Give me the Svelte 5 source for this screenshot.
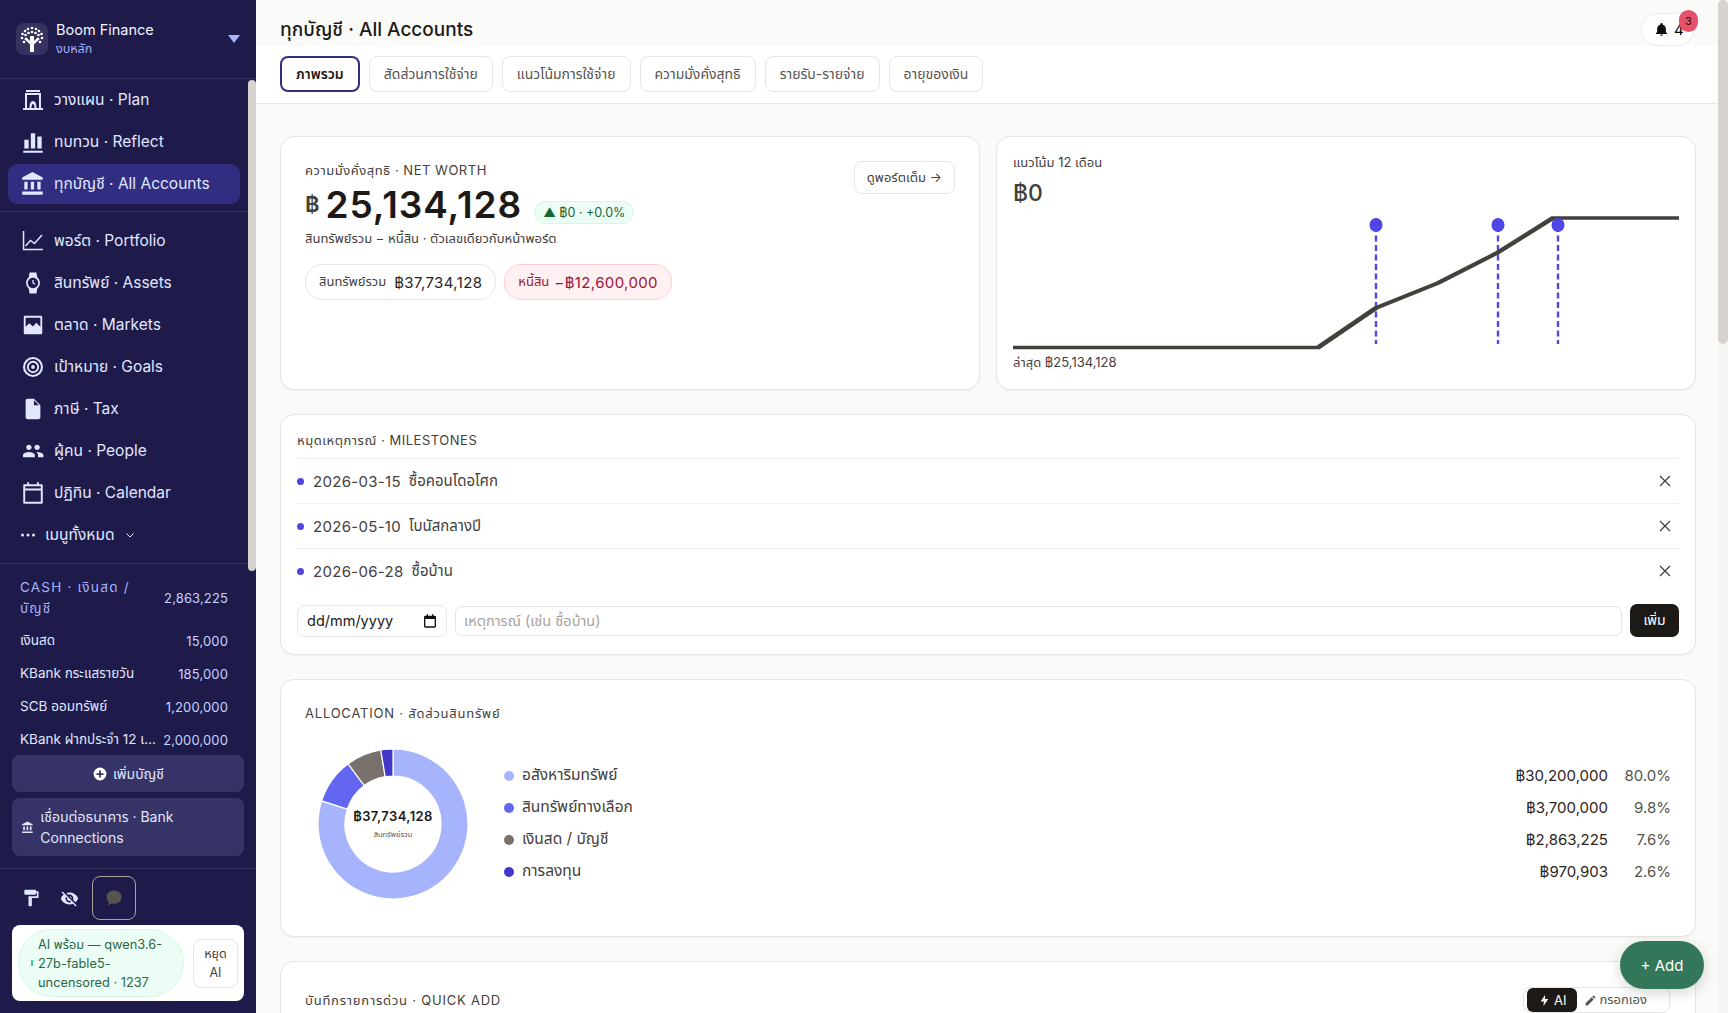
<script lang="ts">
  const planNav = [
    { label: "วางแผน · Plan", icon: "plan" },
    { label: "ทบทวน · Reflect", icon: "reflect" },
    { label: "ทุกบัญชี · All Accounts", icon: "bank", active: true },
  ];
  const moreNav = [
    { label: "พอร์ต · Portfolio", icon: "chart" },
    { label: "สินทรัพย์ · Assets", icon: "watch" },
    { label: "ตลาด · Markets", icon: "photo" },
    { label: "เป้าหมาย · Goals", icon: "target" },
    { label: "ภาษี · Tax", icon: "file" },
    { label: "ผู้คน · People", icon: "people" },
    { label: "ปฏิทิน · Calendar", icon: "calendar" },
  ];
  const accounts = [
    { name: "เงินสด", value: "15,000" },
    { name: "KBank กระแสรายวัน", value: "185,000" },
    { name: "SCB ออมทรัพย์", value: "1,200,000" },
    { name: "KBank ฝากประจำ 12 เดือน", value: "2,000,000" },
  ];
  const tabs = ["ภาพรวม", "สัดส่วนการใช้จ่าย", "แนวโน้มการใช้จ่าย", "ความมั่งคั่งสุทธิ", "รายรับ-รายจ่าย", "อายุของเงิน"];
  const milestones = [
    { date: "2026-03-15", name: "ซื้อคอนโดอโศก" },
    { date: "2026-05-10", name: "โบนัสกลางปี" },
    { date: "2026-06-28", name: "ซื้อบ้าน" },
  ];
  const allocation = [
    { name: "อสังหาริมทรัพย์", amount: "฿30,200,000", pct: 80.0, color: "#a5b4fc" },
    { name: "สินทรัพย์ทางเลือก", amount: "฿3,700,000", pct: 9.8, color: "#6366f1" },
    { name: "เงินสด / บัญชี", amount: "฿2,863,225", pct: 7.6, color: "#78716c" },
    { name: "การลงทุน", amount: "฿970,903", pct: 2.6, color: "#4338ca" },
  ];

  // icons are drawn at different sizes in a 24 box, this evens them out
  const iconScale: Record<string, number> = {
    plan: 0.92,
    reflect: 1,
    bank: 1,
    chart: 0.92,
    watch: 0.8,
    photo: 0.85,
    target: 0.87,
    file: 0.85,
    people: 0.84,
    calendar: 0.9,
  };
  function iconBox(name: string) {
    const size = 24 / iconScale[name];
    const off = (24 - size) / 2;
    return `${off} ${off} ${size} ${size}`;
  }

  function point(r: number, pct: number) {
    const a = (pct / 100) * Math.PI * 2;
    return `${(75 + r * Math.sin(a)).toFixed(2)} ${(75 - r * Math.cos(a)).toFixed(2)}`;
  }

  function sector(from: number, to: number) {
    const large = to - from > 50 ? 1 : 0;
    return `M${point(75, from)}A75 75 0 ${large} 1 ${point(75, to)}L${point(48, to)}A48 48 0 ${large} 0 ${point(48, from)}Z`;
  }

  let total = 0;
  const slices = allocation.map((a) => {
    const d = sector(total, total + a.pct);
    total += a.pct;
    return { d, color: a.color };
  });

  const markerX = [181.5, 242.5, 272.5];
  const leaves = [[16, 5], [12, 6], [20, 6], [9, 8], [23, 8], [6.5, 11], [25.5, 11], [6, 15], [26, 15], [8, 19], [24, 19], [16, 9], [12.5, 10], [19.5, 10], [9.5, 12], [22.5, 12], [10, 16], [22, 16]];
</script>

{#snippet navIcon(name: string)}
  <svg class="nav-icon" viewBox={iconBox(name)} fill="currentColor">
    {#if name === "plan"}
      <path fill-rule="evenodd" d="M5 2h14v2H5zM4 5h16v15h2v2H2v-2h2zm2 2v13h2.500c0-4 1-7 3.500-7s3.500 3 3.500 7H18V7zm4.500 13h3c0-2-.5-4-1.500-4s-1.500 2-1.500 4z" />
    {:else if name === "reflect"}
      <path d="M3 20h18v2H3zM4 10h4v8H4zM10 4h4v14h-4zM16 7h4v11h-4z" />
    {:else if name === "bank"}
      <path d="M4 10v7h3v-7H4zm6 0v7h3v-7h-3zM2 22h19v-3H2v3zm14-12v7h3v-7h-3zm-4.500-9L2 6v2h19V6l-9.500-5z" />
    {:else if name === "chart"}
      <path d="M2.500 2v18.500H22" fill="none" stroke="currentColor" stroke-width="1.500" />
      <path d="M4.500 17l5-5.500 4 3L21 6" fill="none" stroke="currentColor" stroke-width="1.500" />
    {:else if name === "watch"}
      <path d="M20 12c0-2.540-1.190-4.810-3.040-6.270L16 0H8l-.95 5.730C5.190 7.190 4 9.450 4 12s1.190 4.810 3.050 6.270L8 24h8l.96-5.730C18.810 16.810 20 14.540 20 12zM6 12c0-3.310 2.690-6 6-6s6 2.690 6 6-2.690 6-6 6-6-2.690-6-6z" />
      <path d="M12 8.500V12l2.500 1.500" fill="none" stroke="currentColor" stroke-width="1.500" />
    {:else if name === "photo"}
      <path fill-rule="evenodd" d="M3 2h18a1 1 0 0 1 1 1v18a1 1 0 0 1-1 1H3a1 1 0 0 1-1-1V3a1 1 0 0 1 1-1zm1 2v10l4-4 4 3.500 3.500-4L20 14V4z" />
    {:else if name === "target"}
      <circle cx="12" cy="12" r="9.500" fill="none" stroke="currentColor" stroke-width="2.200" />
      <circle cx="12" cy="12" r="5.500" fill="none" stroke="currentColor" stroke-width="2" />
      <circle cx="12" cy="12" r="2" />
    {:else if name === "file"}
      <path d="M6 1c-1.100 0-2 .9-2 2v18c0 1.100.9 2 2 2h12c1.100 0 2-.9 2-2V8l-7-7H6zm7 7V2.500L18.500 8H13z" />
    {:else if name === "people"}
      <path d="M16.500 11c1.660 0 3-1.340 3-3s-1.340-3-3-3-3 1.340-3 3 1.340 3 3 3zm-9 0c1.660 0 3-1.340 3-3s-1.340-3-3-3-3 1.340-3 3 1.340 3 3 3zm0 2c-2.330 0-6.500 1.170-6.500 3.500V19h13v-2.500c0-2.330-4.170-3.500-6.500-3.500zm9 0c-.29 0-.62.020-.97.05 1.160.84 1.970 1.970 1.970 3.450V19h6v-2.500c0-2.330-4.670-3.500-7-3.500z" />
    {:else if name === "calendar"}
      <path fill-rule="evenodd" d="M6 1h2v2h8V1h2v2h3a1 1 0 0 1 1 1v18a1 1 0 0 1-1 1H3a1 1 0 0 1-1-1V4a1 1 0 0 1 1-1h3zM4 5v2.500h16V5zm0 4.500V21h16V9.500z" />
    {/if}
  </svg>
{/snippet}

<div class="app">
  <aside class="sidebar">
    <div class="brand">
      <span class="logo">
        <svg viewBox="0 0 32 32" width="32" height="32" fill="#fff">
          <path d="M14 29v-7.500L8.500 16l1.700-1.700 3.800 3.700v-5h4v5l3.800-3.700 1.700 1.700-5.500 5.500V29z" />
          {#each leaves as [cx, cy]}
            <circle {cx} {cy} r="1.350" />
          {/each}
        </svg>
      </span>
      <div class="brand-text">
        <div class="brand-name">Boom Finance</div>
        <div class="brand-sub">งบหลัก</div>
      </div>
      <span class="caret"></span>
    </div>

    <div class="side-scroll">
      <nav class="nav nav-first">
        {#each planNav as item}
          <a class="nav-item" class:active={item.active} href="#top">
            {@render navIcon(item.icon)}
            <span>{item.label}</span>
          </a>
        {/each}
      </nav>
      <nav class="nav nav-second">
        {#each moreNav as item}
          <a class="nav-item" href="#top">
            {@render navIcon(item.icon)}
            <span>{item.label}</span>
          </a>
        {/each}
        <button class="nav-all">
          <svg viewBox="0 0 16 16" width="16" height="16" fill="currentColor">
            <circle cx="2.500" cy="8" r="1.500" /><circle cx="8" cy="8" r="1.500" /><circle cx="13.500" cy="8" r="1.500" />
          </svg>
          <span>เมนูทั้งหมด</span>
          <svg viewBox="0 0 12 12" width="12" height="12" fill="none" stroke="currentColor" stroke-width="1"><path d="M2.500 4.500L6 8l3.500-3.500" /></svg>
        </button>
      </nav>

      <section class="accounts">
        <div class="acc-head">
          <span class="acc-title">CASH · เงินสด / บัญชี</span>
          <span class="acc-total">2,863,225</span>
        </div>
        {#each accounts as acc}
          <div class="acc-row">
            <span class="acc-name">{acc.name}</span>
            <span class="acc-value">{acc.value}</span>
          </div>
        {/each}
      </section>

      <div class="side-actions">
        <button class="side-btn center">
          <svg viewBox="0 0 24 24" width="14" height="14" fill="#fff"><path d="M12 1a11 11 0 1 0 0 22 11 11 0 0 0 0-22zm6 12.500h-4.500V18h-3v-4.500H6v-3h4.500V6h3v4.500H18z" /></svg>
          เพิ่มบัญชี
        </button>
        <button class="side-btn">
          <svg viewBox="0 0 24 24" width="15" height="15" fill="currentColor"><path d="M4 10v7h3v-7H4zm6 0v7h3v-7h-3zM2 22h19v-3H2v3zm14-12v7h3v-7h-3zm-4.500-9L2 6v2h19V6l-9.500-5z" /></svg>
          <span>เชื่อมต่อธนาคาร · Bank Connections</span>
        </button>
      </div>
    </div>
    <span class="side-thumb"></span>

    <div class="side-foot">
      <div class="tools">
        <button class="tool">
          <svg viewBox="0 0 24 24" width="20" height="20" fill="#e0e7ff"><path d="M18 4V3c0-.55-.45-1-1-1H5c-.55 0-1 .45-1 1v4c0 .55.45 1 1 1h12c.55 0 1-.45 1-1V6h1v4H9v11c0 .55.45 1 1 1h2c.55 0 1-.45 1-1v-9h8V4h-3z" /></svg>
        </button>
        <button class="tool">
          <svg viewBox="0 0 24 24" width="19" height="19" fill="#e0e7ff"><path d="M12 7c2.760 0 5 2.240 5 5 0 .65-.13 1.260-.36 1.830l2.920 2.920c1.510-1.260 2.700-2.890 3.430-4.750-1.730-4.390-6-7.500-11-7.500-1.400 0-2.740.25-3.980.7l2.160 2.160C10.740 7.130 11.350 7 12 7zM2 4.270l2.280 2.280.46.46C3.080 8.300 1.780 10.020 1 12c1.730 4.390 6 7.500 11 7.500 1.550 0 3.030-.3 4.380-.84l.42.42L19.730 22 21 20.730 3.270 3 2 4.270zM7.530 9.800l1.550 1.550c-.05.21-.08.43-.08.65 0 1.660 1.340 3 3 3 .22 0 .44-.03.65-.08l1.550 1.550c-.67.33-1.410.53-2.200.53-2.760 0-5-2.240-5-5 0-.79.2-1.530.53-2.200zm4.310-.78l3.150 3.150.02-.16c0-1.660-1.340-3-3-3l-.17.01z" /></svg>
        </button>
        <button class="tool tool-chat">
          <svg viewBox="0 0 24 24" width="20" height="20" fill="#57534e"><path d="M12 3c5 0 9 3.400 9 8s-4 8-9 8c-1 0-1.900-.1-2.800-.4L5 21l.6-4.200A7.500 7.500 0 0 1 3 11c0-4.600 4-8 9-8z" /></svg>
        </button>
      </div>
      <div class="ai-card">
        <div class="ai-pill">
          <span class="ai-dot"></span>
          <span>AI พร้อม — qwen3.6-27b-fable5-uncensored · 1237</span>
        </div>
        <button class="ai-stop">หยุด AI</button>
      </div>
    </div>
  </aside>

  <main class="main">
    <header class="page-head">
      <h1>ทุกบัญชี · All Accounts</h1>
      <button class="bell">
        <svg viewBox="0 0 24 24" width="15" height="15" fill="#111"><path d="M12 22a2.500 2.500 0 0 0 2.400-2H9.600A2.500 2.500 0 0 0 12 22zm7-6v-5c0-3.400-1.800-6.100-5-6.800V3.500a2 2 0 0 0-4 0v.7C6.800 4.900 5 7.600 5 11v5l-2 2v1h18v-1z" /></svg>
        <span>4</span>
        <span class="bell-badge">3</span>
      </button>
    </header>
    <div class="tabs">
      {#each tabs as tab, i}
        <button class="tab" class:on={i === 0}>{tab}</button>
      {/each}
    </div>

    <div class="content">
      <div class="top-row">
        <section class="card net">
          <div class="net-head">
            <div class="eyebrow">ความมั่งคั่งสุทธิ · NET WORTH</div>
            <button class="ghost">ดูพอร์ตเต็ม →</button>
          </div>
          <div class="net-amount">
            <span class="baht">฿</span>
            <span class="big">25,134,128</span>
            <span class="delta">▲ ฿0 · +0.0%</span>
          </div>
          <div class="net-note">สินทรัพย์รวม − หนี้สิน · ตัวเลขเดียวกับหน้าพอร์ต</div>
          <div class="chips">
            <span class="chip"><small>สินทรัพย์รวม</small> ฿37,734,128</span>
            <span class="chip debt"><small>หนี้สิน</small> −฿12,600,000</span>
          </div>
        </section>

        <section class="card trend">
          <div class="eyebrow plain">แนวโน้ม 12 เดือน</div>
          <div class="trend-value">฿0</div>
          <svg class="trend-chart" viewBox="0 0 333 134" width="666" height="134" preserveAspectRatio="none">
            {#each markerX as x}
              <line x1={x} x2={x} y1="10" y2="128" stroke="#5048e5" stroke-width="2.400" stroke-dasharray="6 3.500" vector-effect="non-scaling-stroke" />
            {/each}
            <polyline points="0,131.500 152.500,131.500 181.500,92 212.500,67 242,37 270,2 333,2" fill="none" stroke="#44403c" stroke-width="3.300" />
            {#each markerX as x}
              <ellipse cx={x} cy="9" rx="3.250" ry="7" fill="#4f46e5" />
            {/each}
          </svg>
          <div class="trend-foot">ล่าสุด ฿25,134,128</div>
        </section>
      </div>

      <section class="card milestones">
        <div class="eyebrow ms-title">หมุดเหตุการณ์ · MILESTONES</div>
        {#each milestones as m}
          <div class="ms-row">
            <span class="ms-dot"></span>
            <span class="ms-date">{m.date}</span>
            <span class="ms-name">{m.name}</span>
            <svg class="ms-x" viewBox="0 0 12 12" width="12" height="12" stroke="#44403c" stroke-width="1.300"><path d="M1 1l10 10M11 1L1 11" /></svg>
          </div>
        {/each}
        <div class="ms-form">
          <div class="date-box">
            <span>dd/mm/yyyy</span>
            <svg viewBox="0 0 24 24" width="16" height="16" fill="#111"><path fill-rule="evenodd" d="M7 2h2v2h6V2h2v2h2a2 2 0 0 1 2 2v14a2 2 0 0 1-2 2H5a2 2 0 0 1-2-2V6a2 2 0 0 1 2-2h2zM5 9v11h14V9z" /></svg>
          </div>
          <input class="ms-input" placeholder="เหตุการณ์ (เช่น ซื้อบ้าน)" />
          <button class="ms-add">เพิ่ม</button>
        </div>
      </section>

      <section class="card alloc">
        <div class="eyebrow wide">ALLOCATION · สัดส่วนสินทรัพย์</div>
        <div class="alloc-body">
          <div class="donut">
            <svg viewBox="0 0 150 150" width="150" height="150">
              {#each slices as s}
                <path d={s.d} fill={s.color} stroke="#fff" stroke-width="1.200" />
              {/each}
            </svg>
            <div class="donut-label">
              <strong>฿37,734,128</strong>
              <small>สินทรัพย์รวม</small>
            </div>
          </div>
          <div class="legend">
            {#each allocation as a}
              <div class="legend-row">
                <span class="legend-dot" style:background={a.color}></span>
                <span class="legend-name">{a.name}</span>
                <span class="legend-amount">{a.amount}</span>
                <span class="legend-pct">{a.pct.toFixed(1)}%</span>
              </div>
            {/each}
          </div>
        </div>
      </section>

      <section class="card quick">
        <div class="eyebrow wide">บันทึกรายการด่วน · QUICK ADD</div>
        <div class="mode">
          <span class="mode-on">
            <svg viewBox="0 0 24 24" width="13" height="13" fill="#fff"><path d="M13 2L5 14h6l-1 8 9-13h-6z" /></svg>
            AI
          </span>
          <span class="mode-off">
            <svg viewBox="0 0 24 24" width="13" height="13" fill="#57534e"><path d="M3 17.250V21h3.750L17.800 9.940l-3.750-3.750zM20.700 7.040a1 1 0 0 0 0-1.410l-2.340-2.340a1 1 0 0 0-1.410 0l-1.830 1.830 3.750 3.750z" /></svg>
            กรอกเอง
          </span>
        </div>
      </section>
    </div>
  </main>

  <!-- page scrollbar: the headless browser hides native ones -->
  <span class="main-track"><span class="main-thumb"></span></span>

  <button class="fab">+ Add</button>
</div>

<style>
  :global(body) {
    margin: 0;
    overflow: hidden;
    font-family: Inter, "Noto Sans", "Noto Sans Thai", "Liberation Sans", sans-serif;
  }

  button {
    font: inherit;
    cursor: pointer;
  }

  .app {
    position: relative;
    display: flex;
    height: 100vh;
    overflow: hidden;
    background: #fafaf8;
    color: #1c1917;
  }

  /* sidebar */
  .sidebar {
    position: relative;
    flex: 0 0 256px;
    width: 256px;
    display: flex;
    flex-direction: column;
    background: #1e1b4b;
    color: #e0e7ff;
  }

  .brand {
    flex: 0 0 79px;
    display: flex;
    align-items: center;
    gap: 8px;
    padding: 0 16px;
    box-sizing: border-box;
    border-bottom: 1px solid #312e5c;
  }

  .logo {
    width: 32px;
    height: 32px;
    border-radius: 8px;
    background: #35325f;
  }

  .brand-text {
    flex: 1;
  }

  .brand-name {
    font-size: 14.5px;
    line-height: 20px;
    color: #f1f5ff;
  }

  .brand-sub {
    font-size: 12.5px;
    line-height: 18px;
    color: #a5b4fc;
  }

  .caret {
    width: 0;
    height: 0;
    border-left: 6px solid transparent;
    border-right: 6px solid transparent;
    border-top: 8px solid #a5b4fc;
  }

  .side-scroll {
    flex: 1;
    min-height: 0;
    display: flex;
    flex-direction: column;
    overflow: hidden;
  }

  .side-thumb {
    position: absolute;
    left: 248px;
    top: 80px;
    width: 8px;
    height: 491px;
    border-radius: 4px;
    background: #d6d3ce;
  }

  .nav {
    flex: none;
    display: flex;
    flex-direction: column;
    gap: 2px;
    width: 248px;
    padding: 0 8px;
    box-sizing: border-box;
    border-bottom: 1px solid #312e5c;
  }

  .nav-first {
    padding-top: 1px;
    padding-bottom: 7px;
  }

  .nav-second {
    padding-top: 9px;
    padding-bottom: 8px;
  }

  .nav-item {
    display: flex;
    align-items: center;
    gap: 8.500px;
    height: 40px;
    padding: 0 11.500px;
    border-radius: 9px;
    color: #e0e7ff;
    text-decoration: none;
    font-size: 15.5px;
  }

  .nav-item.active {
    background: #312e81;
  }

  .nav-icon {
    width: 26px;
    height: 26px;
    flex: none;
  }

  .nav-all {
    display: flex;
    align-items: center;
    gap: 9px;
    height: 40px;
    padding: 0 12px;
    border: 0;
    background: transparent;
    color: #e0e7ff;
    font-size: 15.5px;
  }

  .accounts {
    flex: 1 1 0;
    min-height: 0;
    overflow: hidden;
    width: 240px;
    box-sizing: border-box;
    padding: 13px 12px 0 20px;
    font-size: 13.5px;
  }

  .acc-head {
    display: flex;
    align-items: center;
    justify-content: space-between;
    gap: 12px;
    margin-bottom: 5px;
  }

  .acc-title {
    width: 120px;
    color: #a5b4fc;
    letter-spacing: 0.09em;
    line-height: 21px;
  }

  .acc-total,
  .acc-value {
    color: #c7d2fe;
    font-size: 13px;
    letter-spacing: 0.01em;
  }

  .acc-row {
    display: flex;
    justify-content: space-between;
    gap: 4px;
    height: 33px;
    align-items: center;
  }

  .acc-name {
    flex: 1;
    min-width: 0;
    overflow: hidden;
    white-space: nowrap;
    text-overflow: ellipsis;
  }

  .side-actions {
    flex: none;
    display: flex;
    flex-direction: column;
    gap: 6px;
    width: 248px;
    padding: 0 4px 12px 12px;
    box-sizing: border-box;
    background: #1e1b4b;
  }

  .side-btn {
    display: flex;
    align-items: center;
    gap: 6px;
    padding: 8px 8px 8px 9px;
    min-height: 37px;
    border: 0;
    border-radius: 8px;
    background: #363366;
    color: #e0e7ff;
    font-size: 14px;
    line-height: 21px;
    text-align: left;
  }

  .side-btn.center {
    justify-content: center;
  }

  .side-foot {
    flex: 0 0 145px;
    box-sizing: border-box;
    border-top: 1px solid #312e5c;
    padding: 7px 12px 0;
  }

  .tools {
    display: flex;
    align-items: center;
    height: 44px;
    margin-bottom: 5px;
  }

  .tool {
    width: 38px;
    height: 44px;
    padding: 0;
    border: 0;
    background: transparent;
    display: grid;
    place-items: center;
  }

  .tool-chat {
    width: 44px;
    margin-left: 4px;
    border: 1.500px solid #a8a29e;
    border-radius: 8px;
  }

  .ai-card {
    display: flex;
    align-items: center;
    gap: 9px;
    height: 76px;
    padding: 0 6px;
    box-sizing: border-box;
    background: #fff;
    border-radius: 8px;
  }

  .ai-pill {
    flex: 1;
    display: flex;
    align-items: center;
    gap: 5px;
    height: 68px;
    padding: 0 8px 0 12px;
    box-sizing: border-box;
    border: 1px solid #d1fae5;
    border-radius: 34px;
    background: #ecfdf5;
    color: #276749;
    font-size: 12.800px;
    line-height: 19px;
  }

  .ai-dot {
    flex: none;
    width: 2px;
    height: 6px;
    background: #34d399;
  }

  .ai-stop {
    flex: 0 0 45px;
    height: 49px;
    padding: 0 6px;
    border: 1px solid #e7e5e4;
    border-radius: 8px;
    background: #fff;
    color: #44403c;
    font-size: 12.500px;
    line-height: 19px;
  }

  /* main */
  .main {
    flex: 1;
    min-width: 0;
    overflow: hidden;
  }

  .main-track {
    position: absolute;
    right: 0;
    top: 0;
    bottom: 0;
    width: 10px;
    background: #f4f4f2;
  }

  .main-thumb {
    display: block;
    height: 344px;
    border-radius: 5px;
    background: #d6d3ce;
  }

  .page-head {
    position: relative;
    height: 46px;
    padding: 0 32px 0 24px;
    display: flex;
    align-items: center;
    justify-content: space-between;
    box-sizing: border-box;
  }

  h1 {
    margin: 14px 0 0;
    font-size: 19px;
    font-weight: 500;
    line-height: 30px;
  }

  .bell {
    position: absolute;
    right: 34px;
    top: 13px;
    width: 53px;
    height: 33px;
    display: flex;
    align-items: center;
    gap: 5px;
    padding: 0 0 0 12px;
    border: 1px solid #eeedeb;
    border-radius: 17px;
    background: #fff;
    font-size: 15px;
    z-index: 1;
  }

  .bell-badge {
    position: absolute;
    right: -5px;
    top: -4px;
    width: 19px;
    height: 22px;
    border-radius: 10px;
    background: #e5526b;
    color: #3b0713;
    font-size: 11px;
    line-height: 22px;
    text-align: center;
  }

  .tabs {
    display: flex;
    gap: 9px;
    height: 58px;
    padding: 10px 24px 11px;
    box-sizing: border-box;
    background: #fff;
    border-bottom: 1px solid #e7e5e4;
  }

  .tab {
    padding: 0 14px;
    border: 1px solid #e7e5e4;
    border-radius: 8px;
    background: #fff;
    color: #57534e;
    font-size: 14px;
  }

  .tab.on {
    border: 2px solid #312e81;
    color: #1c1917;
    font-weight: 600;
  }

  .content {
    display: flex;
    flex-direction: column;
    gap: 24px;
    padding: 32px 32px 0 24px;
    box-sizing: border-box;
  }

  .top-row {
    display: grid;
    grid-template-columns: 1fr 1fr;
    gap: 16px;
  }

  .card {
    box-sizing: border-box;
    background: #fff;
    border: 1px solid #e7e5e4;
    border-radius: 14px;
    box-shadow: 0 1px 2px rgba(28, 25, 23, 0.04);
  }

  .eyebrow {
    font-size: 13px;
    color: #44403c;
    letter-spacing: 0.04em;
  }

  .eyebrow.plain {
    letter-spacing: 0;
  }

  .eyebrow.wide {
    letter-spacing: 0.06em;
  }

  .net {
    height: 254px;
    padding: 24px;
  }

  .net-head {
    display: flex;
    justify-content: space-between;
    align-items: flex-start;
  }

  .ghost {
    height: 33px;
    padding: 0 12px;
    border: 1px solid #e7e5e4;
    border-radius: 8px;
    background: #fff;
    color: #44403c;
    font-size: 13px;
  }

  .net-amount {
    display: flex;
    align-items: center;
    margin-top: -10px;
    height: 40px;
  }

  .baht {
    font-size: 22px;
    font-weight: 600;
    margin-right: 6px;
    color: #44403c;
  }

  .big {
    font-size: 37px;
    font-weight: 600;
    letter-spacing: 0.025em;
  }

  .delta {
    margin: 17px 0 0 12px;
    padding: 3px 8px;
    border: 1px solid #d1fae5;
    border-radius: 14px;
    background: #ecfdf5;
    color: #166534;
    font-size: 12.500px;
  }

  .net-note {
    margin-top: 5px;
    font-size: 13px;
    color: #44403c;
  }

  .chips {
    display: flex;
    gap: 8px;
    margin-top: 15px;
  }

  .chip {
    height: 34px;
    padding: 0 13px;
    display: flex;
    align-items: center;
    gap: 8px;
    border: 1px solid #e7e5e4;
    border-radius: 17px;
    background: #fff;
    font-size: 15px;
    letter-spacing: 0.025em;
    color: #292524;
  }

  .chip small {
    font-size: 13px;
    letter-spacing: 0;
    color: #44403c;
  }

  .chip.debt,
  .chip.debt small {
    color: #9f1239;
  }

  .chip.debt {
    gap: 5px;
    background: #fff1f2;
    border-color: #fecdd3;
  }

  .trend {
    height: 254px;
    padding: 16px;
  }

  .trend-value {
    margin-top: 6px;
    font-size: 23px;
    font-weight: 500;
    color: #44403c;
  }

  .trend-chart {
    display: block;
    margin-top: 9px;
    overflow: visible;
  }

  .trend-foot {
    margin-top: 3px;
    font-size: 13px;
    color: #44403c;
  }

  .milestones {
    height: 241px;
    padding: 16px;
  }

  .ms-title {
    padding-bottom: 8px;
    line-height: 19px;
  }

  .ms-row {
    display: flex;
    align-items: center;
    height: 45px;
    box-sizing: border-box;
    border-top: 1px solid #f2f1ef;
    font-size: 15px;
    color: #44403c;
  }

  .ms-dot {
    width: 7px;
    height: 7px;
    border-radius: 50%;
    background: #4f46e5;
    margin-right: 9px;
  }

  .ms-date {
    letter-spacing: 0.02em;
    margin-right: 8px;
  }

  .ms-x {
    margin-left: auto;
    margin-right: 8px;
  }

  .ms-form {
    display: flex;
    gap: 8px;
    align-items: center;
    margin-top: 11px;
  }

  .date-box {
    flex: 0 0 150px;
    height: 32px;
    display: flex;
    align-items: center;
    justify-content: space-between;
    padding: 0 8px 0 9px;
    box-sizing: border-box;
    border: 1px solid #e7e5e4;
    border-radius: 7px;
    font-size: 14.500px;
    color: #1c1917;
  }

  .ms-input {
    flex: 1;
    height: 30px;
    padding: 0 8px;
    box-sizing: border-box;
    border: 1px solid #e7e5e4;
    border-radius: 7px;
    font: inherit;
    font-size: 14.500px;
  }

  .ms-input::placeholder {
    color: #a8a29e;
  }

  .ms-add {
    height: 33px;
    width: 49px;
    padding: 0;
    border: 0;
    border-radius: 7px;
    background: #1c1917;
    color: #fff;
    font-size: 14px;
  }

  .alloc {
    height: 258px;
    padding: 24px;
  }

  .alloc-body {
    display: flex;
    align-items: center;
    gap: 36px;
    margin-top: 25px;
  }

  .donut {
    position: relative;
    width: 150px;
    height: 150px;
    margin-left: 13px;
    flex: none;
  }

  .donut-label {
    position: absolute;
    inset: 0;
    display: flex;
    flex-direction: column;
    align-items: center;
    justify-content: center;
    gap: 5px;
    padding-bottom: 1px;
    box-sizing: border-box;
  }

  .donut-label strong {
    font-size: 13px;
    font-weight: 600;
    letter-spacing: 0.03em;
  }

  .donut-label small {
    font-size: 7.500px;
    color: #57534e;
  }

  .legend {
    flex: 1;
    display: flex;
    flex-direction: column;
    margin-top: -1px;
  }

  .legend-row {
    display: flex;
    align-items: center;
    height: 32px;
    font-size: 15px;
    color: #44403c;
  }

  .legend-dot {
    width: 10px;
    height: 10px;
    border-radius: 50%;
    margin-right: 8px;
  }

  .legend-name {
    flex: 1;
    font-size: 15.500px;
  }

  .legend-amount {
    color: #292524;
  }

  .legend-pct {
    width: 63px;
    text-align: right;
    color: #57534e;
  }

  .quick {
    position: relative;
    height: 420px;
    padding: 29px 24px;
  }

  .mode {
    position: absolute;
    right: 25px;
    top: 25px;
    display: flex;
    align-items: center;
    gap: 7px;
    height: 26px;
    width: 147px;
    box-sizing: border-box;
    padding: 2px 3px;
    border: 1px solid #e7e5e4;
    border-radius: 8px;
    font-size: 13px;
  }

  .mode-on {
    display: flex;
    align-items: center;
    gap: 3px;
    padding: 0 11px;
    height: 24px;
    border-radius: 6px;
    background: #1c1917;
    color: #fff;
  }

  .mode-off {
    display: flex;
    align-items: center;
    gap: 2px;
    color: #57534e;
    white-space: nowrap;
  }

  .fab {
    position: absolute;
    left: 1620px;
    top: 941px;
    width: 84px;
    height: 48px;
    border: 0;
    border-radius: 24px;
    background: #33775a;
    color: #fff;
    font-size: 15px;
    box-shadow: 0 4px 14px rgba(28, 25, 23, 0.18);
  }
</style>
